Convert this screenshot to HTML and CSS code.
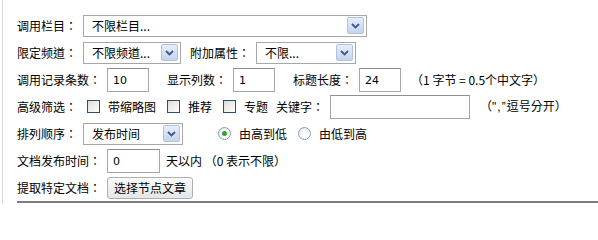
FILE: index.html
```html
<!DOCTYPE html>
<html lang="zh-CN">
<head>
<meta charset="utf-8">
<title>标签生成</title>
<link rel="stylesheet" href="styles.css">
</head>
<body>
<div class="frame">
  <div class="form">
    <div class="row">
      <span class="lbl">调用栏目：</span>
      <div class="sel w-col"><span class="sel-text">不限栏目...</span><span class="sel-btn"><svg viewBox="0 0 9 6" width="9" height="6"><path d="M1 1 L4.5 4.5 L8 1" fill="none" stroke="#3c5a8c" stroke-width="1.8"/></svg></span></div>
    </div>
    <div class="row">
      <span class="lbl">限定频道：</span>
      <div class="sel w-chan"><span class="sel-text">不限频道...</span><span class="sel-btn"><svg viewBox="0 0 9 6" width="9" height="6"><path d="M1 1 L4.5 4.5 L8 1" fill="none" stroke="#3c5a8c" stroke-width="1.8"/></svg></span></div>
      <span class="lbl gap-s">附加属性：</span>
      <div class="sel w-attr"><span class="sel-text">不限...</span><span class="sel-btn"><svg viewBox="0 0 9 6" width="9" height="6"><path d="M1 1 L4.5 4.5 L8 1" fill="none" stroke="#3c5a8c" stroke-width="1.8"/></svg></span></div>
    </div>
    <div class="row">
      <span class="lbl">调用记录条数：</span>
      <input class="txt w-num" type="text" value="10">
      <span class="lbl gap-l">显示列数：</span>
      <input class="txt w-num" type="text" value="1">
      <span class="lbl gap-l">标题长度：</span>
      <input class="txt w-num" type="text" value="24">
      <span class="note">（1 字节 = 0.5个中文字）</span>
    </div>
    <div class="row">
      <span class="lbl">高级筛选：</span>
      <span class="chk first"></span><span class="opt">带缩略图</span>
      <span class="chk"></span><span class="opt">推荐</span>
      <span class="chk"></span><span class="opt">专题</span>
      <span class="lbl gap-k">关键字：</span>
      <input class="txt w-key" type="text" value="">
      <span class="note quote">（<span class="latin">",”</span>逗号分开）</span>
    </div>
    <div class="row">
      <span class="lbl">排列顺序：</span>
      <div class="sel w-order"><span class="sel-text">发布时间</span><span class="sel-btn"><svg viewBox="0 0 9 6" width="9" height="6"><path d="M1 1 L4.5 4.5 L8 1" fill="none" stroke="#3c5a8c" stroke-width="1.8"/></svg></span></div>
      <span class="radio on first"></span><span class="opt">由高到低</span>
      <span class="radio"></span><span class="opt">由低到高</span>
    </div>
    <div class="row">
      <span class="lbl">文档发布时间：</span>
      <input class="txt w-day" type="text" value="0">
      <span class="lbl">天以内 （0 表示不限）</span>
    </div>
    <div class="row">
      <span class="lbl">提取特定文档：</span>
      <button class="btn" type="button">选择节点文章</button>
    </div>
  </div>
</div>
</body>
</html>
```

FILE: styles.css
```css
html, body {
  margin: 0;
  padding: 0;
  background: #fff;
}
body {
  font-family: "Noto Sans CJK TC", "Noto Sans CJK SC", sans-serif;
  font-size: 12px;
  color: #000;
  font-feature-settings: "locl" 0;
}
.frame {
  margin-left: 2px;
  border-left: 1px solid #d6d6d6;
  height: 204px;
  box-sizing: border-box;
  padding-left: 14px;
}
.form {
  border-bottom: 2px solid #7c7c7c;
  padding-top: 12px;
}
.row {
  display: flex;
  align-items: center;
  height: 27px;
  gap: 6px;
  white-space: nowrap;
}
.lbl, .opt, .note {
  line-height: 16px;
}
.gap-s { margin-left: 3px; }
.gap-l { margin-left: 12px; }
.gap-k { margin-left: 2px; }
.note { margin-left: 4px; }
.latin {
  font-family: "Liberation Sans", sans-serif;
  letter-spacing: 1px;
}

.sel {
  box-sizing: border-box;
  height: 22px;
  border: 1px solid #a7a7a7;
  background: #fff;
  display: flex;
  align-items: center;
  justify-content: space-between;
  padding: 0 2px 0 8px;
}
.sel-text {
  line-height: 16px;
}
.sel-btn {
  box-sizing: border-box;
  width: 17px;
  height: 17px;
  border: 1px solid #b3c3dd;
  border-radius: 2px;
  background: linear-gradient(#e6eefc, #c4d3ef);
  display: flex;
  align-items: center;
  justify-content: center;
}
.w-col { width: 284px; }
.w-chan { width: 98px; }
.w-attr { width: 100px; }
.w-order { width: 100px; }

.txt {
  box-sizing: border-box;
  height: 24px;
  border: 1px solid #a7a7a7;
  border-top-color: #8e8e8e;
  padding: 2px 4px 0 5px;
  margin: 0;
  font-family: "DejaVu Sans", sans-serif;
  font-size: 11px;
  color: #000;
  background: #fff;
  outline: none;
}
.w-num { width: 42px; }
.w-key { width: 140px; }
.w-day { width: 53px; }

.chk {
  box-sizing: border-box;
  width: 13px;
  height: 13px;
  border: 1px solid #274e74;
  background: linear-gradient(135deg, #dcdcd6, #ffffff);
  margin-left: 5px;
}
.chk.first { margin-left: 4px; }
.opt { margin-left: 2px; }

.radio {
  box-sizing: border-box;
  width: 13px;
  height: 13px;
  border-radius: 50%;
  border: 1px solid #8da0b6;
  background: radial-gradient(circle at 60% 60%, #ffffff 30%, #d6d9de 100%);
  margin-left: 5px;
  position: relative;
}
.radio.first { margin-left: 29px; }
.radio.on::after {
  content: "";
  position: absolute;
  left: 3px;
  top: 3px;
  width: 5px;
  height: 5px;
  border-radius: 50%;
  background: #3d9c2a;
}

.btn {
  box-sizing: border-box;
  height: 22px;
  width: 86px;
  margin: 0;
  padding: 0;
  border: 1px solid #b0b0b0;
  border-radius: 3px;
  background: linear-gradient(#fbfbfb, #e6e6e6);
  font-family: "Noto Sans CJK TC", "Noto Sans CJK SC", sans-serif;
  font-size: 12px;
  color: #000;
  font-feature-settings: "locl" 0;
}
```
